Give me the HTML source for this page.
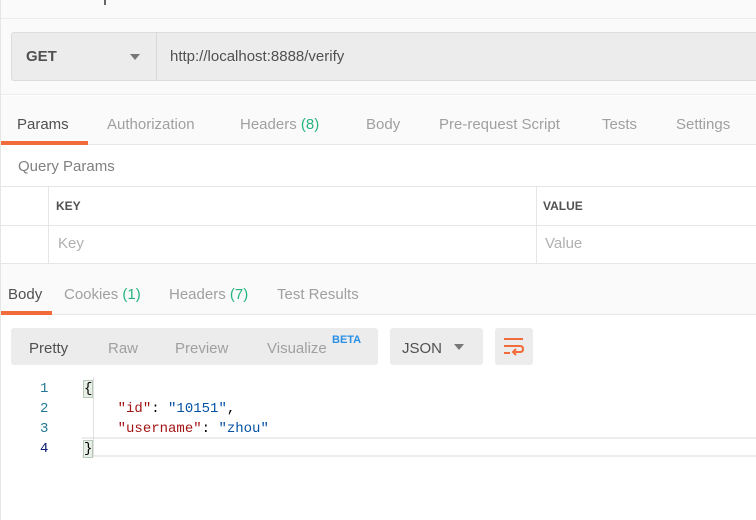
<!DOCTYPE html>
<html><head><style>
*{margin:0;padding:0;box-sizing:border-box}
body{width:756px;height:520px;overflow:hidden;background:#fff;font-family:"Liberation Sans",sans-serif;position:relative;color:#505050}
.a{position:absolute}
.t{font-size:15px;color:#a0a0a0;white-space:nowrap}
.g{color:#26b47f}
.mono{font-family:"Liberation Mono",monospace;font-size:14px}
</style></head><body>
<div class="a" style="left:0;top:0;width:756px;height:19px;background:#fafafa;border-bottom:1px solid #ececec"></div>
<div class="a" style="left:104px;top:0;width:2px;height:5px;background:#666"></div>
<div class="a" style="left:0;top:19px;width:756px;height:76px;background:#fafafa;border-bottom:1px solid #ececec"></div>
<div class="a" style="left:11px;top:32px;width:760px;height:49px;background:#ececec;border:1px solid #dcdcdc;border-radius:3px"></div>
<div class="a" style="left:156px;top:32px;width:1px;height:49px;background:#d8d8d8"></div>
<div class="a" style="left:26px;top:48px;font-size:15px;font-weight:bold;color:#505050">GET</div>
<div class="a" style="left:130px;top:54px;width:0;height:0;border-left:5px solid transparent;border-right:5px solid transparent;border-top:6px solid #777"></div>
<div class="a" style="left:170px;top:48px;font-size:15px;color:#505050">http://localhost:8888/verify</div>
<div class="a" style="left:0;top:96px;width:756px;height:49px;background:#fafafa;border-bottom:1px solid #e6e6e6"></div>
<div class="a t" style="left:17px;top:116px;color:#505050">Params</div>
<div class="a" style="left:0;top:141px;width:88px;height:4px;background:#f26b3a"></div>
<div class="a t" style="left:107px;top:116px">Authorization</div>
<div class="a t" style="left:240px;top:116px">Headers <span class="g">(8)</span></div>
<div class="a t" style="left:366px;top:116px">Body</div>
<div class="a t" style="left:439px;top:116px">Pre-request Script</div>
<div class="a t" style="left:602px;top:116px">Tests</div>
<div class="a t" style="left:676px;top:116px">Settings</div>
<div class="a" style="left:18px;top:158px;font-size:15px;color:#808080">Query Params</div>
<div class="a" style="left:0;top:186px;width:756px;height:1px;background:#e6e6e6"></div>
<div class="a" style="left:0;top:225px;width:756px;height:1px;background:#e6e6e6"></div>
<div class="a" style="left:0;top:263px;width:756px;height:1px;background:#e6e6e6"></div>
<div class="a" style="left:48px;top:187px;width:1px;height:76px;background:#e6e6e6"></div>
<div class="a" style="left:536px;top:187px;width:1px;height:76px;background:#e6e6e6"></div>
<div class="a" style="left:56px;top:199px;font-size:12px;font-weight:bold;color:#505050">KEY</div>
<div class="a" style="left:543px;top:199px;font-size:12px;font-weight:bold;color:#505050">VALUE</div>
<div class="a" style="left:58px;top:235px;font-size:15px;color:#b0b0b0">Key</div>
<div class="a" style="left:545px;top:235px;font-size:15px;color:#b0b0b0">Value</div>
<div class="a" style="left:0;top:264px;width:756px;height:51px;background:#fafafa;border-bottom:1px solid #e6e6e6"></div>
<div class="a t" style="left:8px;top:286px;color:#505050">Body</div>
<div class="a" style="left:0;top:311px;width:52px;height:4px;background:#f26b3a"></div>
<div class="a t" style="left:64px;top:286px">Cookies <span class="g">(1)</span></div>
<div class="a t" style="left:169px;top:286px">Headers <span class="g">(7)</span></div>
<div class="a t" style="left:277px;top:286px">Test Results</div>
<div class="a" style="left:11px;top:328px;width:367px;height:37px;background:#ececec;border-radius:3px"></div>
<div class="a t" style="left:29px;top:340px;color:#505050">Pretty</div>
<div class="a t" style="left:108px;top:340px">Raw</div>
<div class="a t" style="left:175px;top:340px">Preview</div>
<div class="a t" style="left:267px;top:340px">Visualize</div>
<div class="a" style="left:332px;top:334px;font-size:11px;font-weight:bold;color:#2a8fe6">BETA</div>
<div class="a" style="left:390px;top:328px;width:93px;height:37px;background:#ececec;border-radius:3px"></div>
<div class="a t" style="left:402px;top:340px;color:#505050">JSON</div>
<div class="a" style="left:454px;top:344px;border-left:5px solid transparent;border-right:5px solid transparent;border-top:6px solid #777"></div>
<div class="a" style="left:495px;top:328px;width:38px;height:37px;background:#ececec;border-radius:3px"></div>
<svg class="a" style="left:502px;top:336px" width="24" height="22" viewBox="0 0 24 22"><path d="M2 3H21M2 10H18Q21 10 21 13Q21 16 18 16H12M2 17H8M14 13L11 16L14 19" stroke="#f26b3a" stroke-width="2" fill="none"/></svg>
<div class="a" style="left:82px;top:437px;width:680px;height:20px;border-top:2px solid #ececec;border-bottom:2px solid #ececec"></div>
<div class="a" style="left:82px;top:377px;width:12px;height:80px;border-right:1px solid #e0e0e0"></div>
<div class="a mono" style="left:40px;top:379px;color:#237893;line-height:20px">1<br>2<br>3<br><span style="color:#0b216f">4</span></div>
<div class="a mono" style="left:84px;top:379px;line-height:20px;color:#000;white-space:pre"><span style="background:#e8efe6;outline:1px solid #b8c8b8">{</span>
    <span style="color:#a31515">"id"</span>: <span style="color:#0451a5">"10151"</span>,
    <span style="color:#a31515">"username"</span>: <span style="color:#0451a5">"zhou"</span>
<span style="background:#e8efe6;outline:1px solid #b8c8b8">}</span></div>
<div class="a" style="left:0;top:0;width:1px;height:520px;background:#e6e6e6"></div>
</body></html>
